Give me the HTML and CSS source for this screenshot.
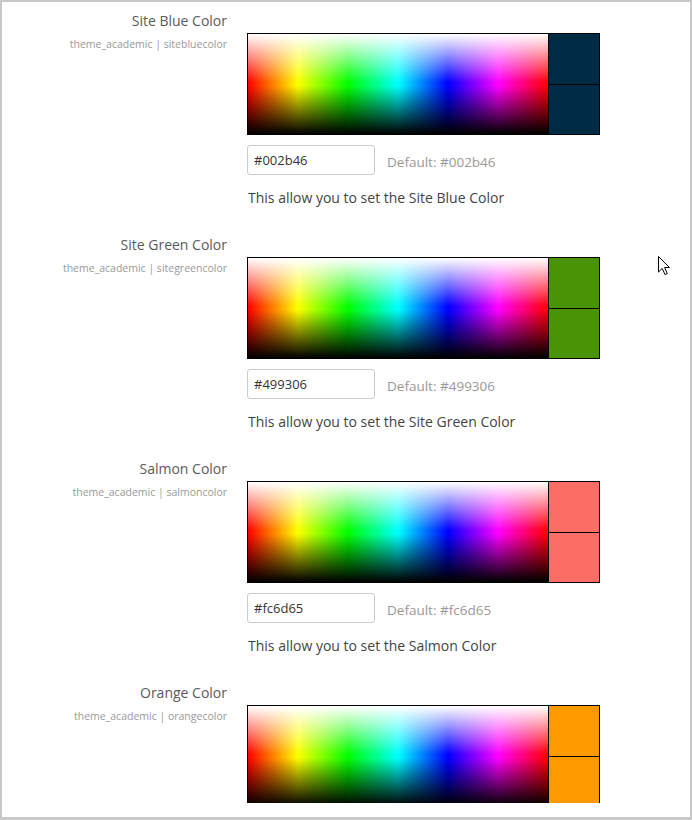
FILE: index.html
```html
<!DOCTYPE html>
<html>
<head>
<meta charset="utf-8">
<link rel="stylesheet" href="styles.css">
</head>
<body>
<div class="frame">
  <div class="viewport">
    <div class="section">
      <div class="label">
        <div class="title">Site Blue Color</div>
        <div class="sub">theme_academic | sitebluecolor</div>
      </div>
      <div class="field">
        <div class="picker">
          <div class="spectrum"></div>
          <div class="swatches">
            <div class="swatch" style="background:#002b46"></div>
            <div class="swatch" style="background:#002b46"></div>
          </div>
        </div>
        <div class="inputrow">
          <input class="hex" type="text" value="#002b46">
          <span class="default">Default: #002b46</span>
        </div>
        <div class="desc">This allow you to set the Site Blue Color</div>
      </div>
    </div>

    <div class="section">
      <div class="label">
        <div class="title">Site Green Color</div>
        <div class="sub">theme_academic | sitegreencolor</div>
      </div>
      <div class="field">
        <div class="picker">
          <div class="spectrum"></div>
          <div class="swatches">
            <div class="swatch" style="background:#499306"></div>
            <div class="swatch" style="background:#499306"></div>
          </div>
        </div>
        <div class="inputrow">
          <input class="hex" type="text" value="#499306">
          <span class="default">Default: #499306</span>
        </div>
        <div class="desc">This allow you to set the Site Green Color</div>
      </div>
    </div>

    <div class="section">
      <div class="label">
        <div class="title">Salmon Color</div>
        <div class="sub">theme_academic | salmoncolor</div>
      </div>
      <div class="field">
        <div class="picker">
          <div class="spectrum"></div>
          <div class="swatches">
            <div class="swatch" style="background:#fc6d65"></div>
            <div class="swatch" style="background:#fc6d65"></div>
          </div>
        </div>
        <div class="inputrow">
          <input class="hex" type="text" value="#fc6d65">
          <span class="default">Default: #fc6d65</span>
        </div>
        <div class="desc">This allow you to set the Salmon Color</div>
      </div>
    </div>

    <div class="section">
      <div class="label">
        <div class="title">Orange Color</div>
        <div class="sub">theme_academic | orangecolor</div>
      </div>
      <div class="field">
        <div class="picker">
          <div class="spectrum"></div>
          <div class="swatches">
            <div class="swatch" style="background:#ff9900"></div>
            <div class="swatch" style="background:#ff9900"></div>
          </div>
        </div>
      </div>
    </div>
  </div>
  <svg class="cursor" width="13" height="20" viewBox="0 0 13 20">
    <path d="M0.5,0.5 L0.5,16 L4.2,12.4 L7,18.6 L9.3,17.6 L6.6,11.5 L11.5,11.5 Z" fill="#fff" stroke="#000" stroke-width="1" stroke-linejoin="miter"/>
  </svg>
</div>
</body>
</html>
```

FILE: styles.css
```css
html, body {
  margin: 0;
  padding: 0;
  background: #fff;
}

.frame {
  position: relative;
  width: 692px;
  height: 820px;
  box-sizing: border-box;
  border-style: solid;
  border-color: #c8c8c8;
  border-width: 2px 2px 3px 2px;
  background: #fff;
  font-family: "Open Sans", "Noto Sans", sans-serif;
  overflow: hidden;
}

.viewport {
  height: 801px;
  overflow: hidden;
  padding-top: 9px;
  box-sizing: border-box;
}

.section {
  display: grid;
  grid-template-columns: 225px 1fr;
  column-gap: 20px;
  margin-bottom: 27px;
}

.label {
  text-align: right;
}

.title {
  font-size: 14px;
  line-height: 20px;
  color: #5a5a5a;
}

.sub {
  font-size: 10.5px;
  line-height: 14px;
  margin-top: 6px;
  color: #999;
}

.field {
  padding-top: 22px;
}

.picker {
  display: flex;
  width: 351px;
  height: 100px;
  border: 1px solid #000;
}

.spectrum {
  width: 300px;
  height: 100px;
  background:
    linear-gradient(to bottom, #fff 0%, rgba(255,255,255,0) 48%, rgba(0,0,0,0) 52%, #000 100%),
    linear-gradient(to right, #f00 0%, #ff0 16.67%, #0f0 33.33%, #0ff 50%, #00f 66.67%, #f0f 83.33%, #f00 100%);
  border-right: 1px solid #000;
}

.swatches {
  display: flex;
  flex-direction: column;
  width: 50px;
}

.swatch {
  flex: 1;
}

.swatch + .swatch {
  border-top: 1px solid #000;
}

.inputrow {
  display: flex;
  align-items: center;
  margin-top: 10px;
  height: 30px;
}

.hex {
  width: 128px;
  height: 30px;
  box-sizing: border-box;
  border: 1px solid #ccc;
  border-radius: 3px;
  padding: 0 6px;
  font-family: "Open Sans", "Noto Sans", sans-serif;
  font-size: 13px;
  color: #333;
  margin: 0;
  outline: none;
}

.default {
  margin-left: 12px;
  font-size: 13.5px;
  color: #999;
  padding-top: 4px;
}

.desc {
  margin-top: 13px;
  font-size: 14px;
  line-height: 20px;
  color: #444;
  padding-left: 1px;
}

.cursor {
  position: absolute;
  left: 656px;
  top: 254px;
}
```
